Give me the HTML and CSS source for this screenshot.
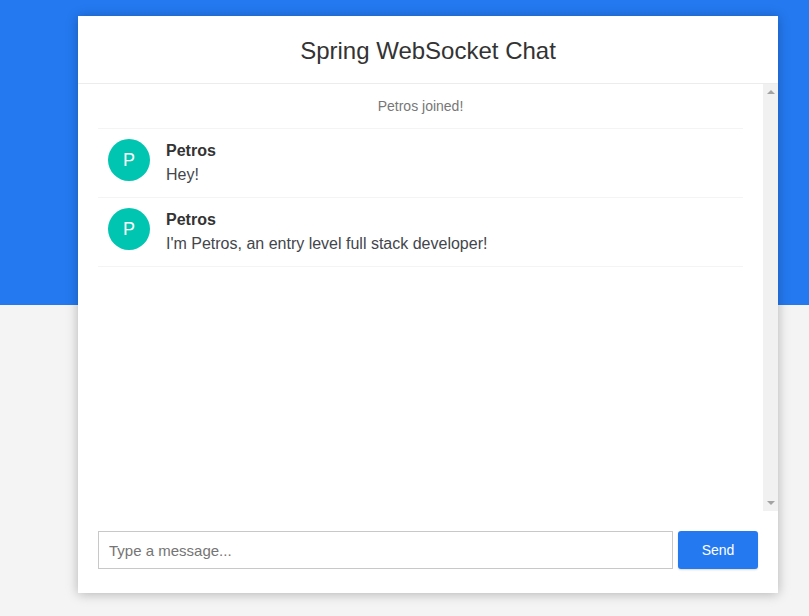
FILE: index.html
```html
<!DOCTYPE html>
<html>
<head>
<meta charset="utf-8">
<link rel="stylesheet" href="styles.css">
</head>
<body>
<div class="chat-container">
  <div class="chat-header"><h2>Spring WebSocket Chat</h2></div>
  <div class="message-pane">
    <ul class="message-area">
      <li class="event-message">Petros joined!</li>
      <li class="chat-message">
        <i class="avatar">P</i>
        <span class="name">Petros</span>
        <p class="text">Hey!</p>
      </li>
      <li class="chat-message">
        <i class="avatar">P</i>
        <span class="name">Petros</span>
        <p class="text">I'm Petros, an entry level full stack developer!</p>
      </li>
    </ul>
    <div class="scrollbar">
      <span class="sb-btn"><svg width="8" height="4" viewBox="0 0 8 4"><polygon points="0,4 8,4 4,0" fill="#a3a3a3"/></svg></span>
      <span class="sb-btn"><svg width="8" height="4" viewBox="0 0 8 4"><polygon points="0,0 8,0 4,4" fill="#a3a3a3"/></svg></span>
    </div>
  </div>
  <form class="message-form">
    <input type="text" class="message-input" placeholder="Type a message...">
    <button type="button" class="send-btn">Send</button>
  </form>
</div>
</body>
</html>
```
FILE: styles.css
```css
html, body { height: 100%; }
body {
  margin: 0;
  font-family: "Liberation Sans", Arial, sans-serif;
  background: linear-gradient(#2479f0 0, #2479f0 305px, #f4f4f4 305px);
  background-repeat: no-repeat;
  background-color: #f4f4f4;
  overflow: hidden;
}
.chat-container {
  width: 700px;
  height: 577px;
  margin: 16px 0 0 78px;
  background: #fff;
  box-shadow: 0 1px 11px rgba(0,0,0,0.27);
  display: flex;
  flex-direction: column;
}
.chat-header {
  height: 67px;
  border-bottom: 1px solid #ececec;
  display: flex;
  align-items: center;
  justify-content: center;
}
.chat-header h2 {
  margin: 2px 0 0;
  font-size: 24px;
  font-weight: 400;
  color: #333;
}
.message-pane {
  display: flex;
  height: 427px;
}
.message-area {
  flex: 1;
  list-style: none;
  margin: 0;
  padding: 0 20px;
  overflow: hidden;
}
.scrollbar {
  width: 15px;
  background: #f1f1f1;
  display: flex;
  flex-direction: column;
  justify-content: space-between;
}
.sb-btn {
  height: 16px;
  display: flex;
  align-items: center;
  justify-content: center;
}
.sb-btn svg { display: block; }
.message-area li {
  line-height: 24px;
  padding: 10px 20px;
  border-bottom: 1px solid #f4f4f4;
  margin: 0;
}
.event-message {
  text-align: center;
  color: #777;
  font-size: 14px;
  word-wrap: break-word;
}
.chat-message {
  position: relative;
  padding-left: 68px !important;
}
.avatar {
  position: absolute;
  left: 10px;
  top: 10px;
  width: 42px;
  height: 42px;
  border-radius: 50%;
  background: #00c5b0;
  color: #fff;
  font-style: normal;
  font-size: 18px;
  line-height: 42px;
  text-align: center;
}
.name {
  display: block;
  font-weight: 700;
  font-size: 16px;
  color: #333;
}
.text {
  margin: 0;
  font-size: 16px;
  color: #43464b;
}
.message-form {
  display: flex;
  gap: 5px;
  padding: 20px 20px 24px;
}
.message-input {
  flex: 1;
  height: 38px;
  box-sizing: border-box;
  border: 1px solid #c8c8c8;
  padding: 0 10px;
  font-size: 15px;
  font-family: inherit;
  outline: none;
  margin: 0;
}
.message-input::placeholder { color: #757575; }
.send-btn {
  width: 80px;
  height: 38px;
  border: none;
  border-radius: 3px;
  background: #2479f0;
  color: #fff;
  font-size: 14px;
  font-family: inherit;
  box-shadow: 0 1px 2px rgba(0,0,0,0.15);
  margin: 0;
}
```
